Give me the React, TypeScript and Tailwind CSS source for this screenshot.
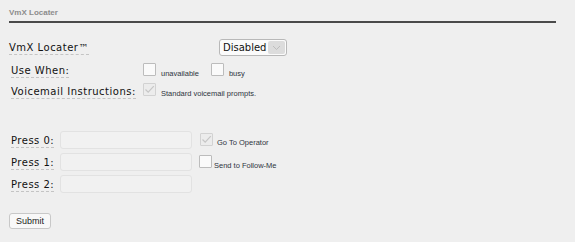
import React from 'react';

const labelCls =
  "font-['DejaVu_Sans',sans-serif] text-[10px] leading-[12px] tracking-[0.5px] text-[#111] border-b border-dashed border-[#c4c4c4] whitespace-nowrap";
const smallCls = "font-['Liberation_Sans',Arial,sans-serif] text-[7.5px] leading-[9px] text-[#2e3440] whitespace-nowrap";

function Check({ checked = false, className = '' }: { checked?: boolean; className?: string }) {
  return (
    <div
      className={`w-[13px] h-[13px] shrink-0 rounded-[1px] border flex items-center justify-center ${
        checked ? 'border-[#d2d2d2] bg-[#ececec]' : 'border-[#bcbcbc] bg-[#fafafa]'
      } ${className}`}
    >
      {checked && (
        <svg width="11" height="11" viewBox="0 0 11 11" fill="none">
          <path d="M1.5 5.5 L4.2 8.2 L9.8 2.2" stroke="#c6c6c6" strokeWidth="1.2" />
        </svg>
      )}
    </div>
  );
}

function TextBox() {
  return <div className="w-[132px] h-[18px] shrink-0 rounded-[3px] border border-[#e2e2e2] bg-[#f1f1f1]" />;
}

export default function App() {
  return (
    <div className="w-[575px] h-[242px] bg-[#efefef] overflow-hidden">
      <div className="ml-[9px] w-[547px]">
        {/* Header */}
        <div className="pt-[8px] pb-[3px] border-b-2 border-[#4a4a4a]">
          <div className="font-['Liberation_Sans',Arial,sans-serif] text-[8px] leading-[10px] font-bold text-[#8c8c8c]">
            VmX Locater
          </div>
        </div>

        {/* VmX Locater row */}
        <div className="mt-[16px] h-[18px] flex items-start">
          <div className="w-[210px] shrink-0 flex items-start">
            <span className={`${labelCls} mt-[3px]`}>VmX Locater™</span>
          </div>
          <div className="w-[68px] h-[17px] rounded-[3px] border border-[#b8b8b8] bg-[#fbfbfb] flex items-center justify-between pl-[3px] pr-[1px]">
            <span className="font-['DejaVu_Sans',sans-serif] text-[10px] leading-[12px] text-[#111]">Disabled</span>
            <div className="w-[17px] h-[13px] rounded-[2px] bg-[#dcdcdc] flex items-center justify-center">
              <svg width="9" height="6" viewBox="0 0 9 6" fill="none">
                <path d="M1 1 L4.5 4.5 L8 1" stroke="#bdbdbd" strokeWidth="1" />
              </svg>
            </div>
          </div>
        </div>

        {/* Use When */}
        <div className="mt-[6px] h-[16px] flex items-start">
          <div className="w-[134px] shrink-0 pl-[2px] flex items-start">
            <span className={`${labelCls} mt-[2px]`}>Use When:</span>
          </div>
          <Check />
          <span className={`${smallCls} ml-[5px] mt-[6px]`}>unavailable</span>
          <Check className="ml-[12px]" />
          <span className={`${smallCls} ml-[5px] mt-[6px]`}>busy</span>
        </div>

        {/* Voicemail Instructions */}
        <div className="mt-[4px] h-[16px] flex items-start">
          <div className="w-[134px] shrink-0 pl-[2px] flex items-start">
            <span className={`${labelCls} mt-[3px]`}>Voicemail Instructions:</span>
          </div>
          <Check checked />
          <span className={`${smallCls} ml-[5px] mt-[6px]`}>Standard voicemail prompts.</span>
        </div>

        {/* Press rows */}
        <div className="mt-[32px] h-[18px] flex items-start">
          <div className="w-[51px] shrink-0 pl-[2px] flex items-start">
            <span className={`${labelCls} mt-[4px]`}>Press 0:</span>
          </div>
          <TextBox />
          <Check checked className="ml-[8px] mt-[2px]" />
          <span className={`${smallCls} ml-[4px] mt-[7px]`}>Go To Operator</span>
        </div>

        <div className="mt-[4px] h-[18px] flex items-start">
          <div className="w-[51px] shrink-0 pl-[2px] flex items-start">
            <span className={`${labelCls} mt-[4px]`}>Press 1:</span>
          </div>
          <TextBox />
          <Check className="ml-[7px] mt-[2px]" />
          <span className={`${smallCls} ml-[2px] mt-[8px]`}>Send to Follow-Me</span>
        </div>

        <div className="mt-[4px] h-[18px] flex items-start">
          <div className="w-[51px] shrink-0 pl-[2px] flex items-start">
            <span className={`${labelCls} mt-[4px]`}>Press 2:</span>
          </div>
          <TextBox />
        </div>

        {/* Submit */}
        <button className="mt-[20px] w-[42px] h-[16px] rounded-[3px] border border-[#c8c8c8] bg-[#f8f8f8] font-['Liberation_Sans',Arial,sans-serif] text-[9px] leading-[14px] text-[#222] flex items-center justify-center">
          Submit
        </button>
      </div>
    </div>
  );
}
